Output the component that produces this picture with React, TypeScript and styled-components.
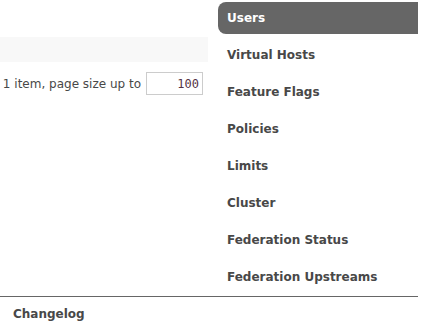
import styled, { createGlobalStyle } from "styled-components";

const GlobalStyle = createGlobalStyle`
  body {
    margin: 0;
    background: #fff;
    font-family: Verdana, "DejaVu Sans", sans-serif;
    font-size: 12px;
    color: #484848;
  }
`;

const Page = styled.div`
  width: 418px;
`;

const Main = styled.div`
  display: grid;
  grid-template-columns: 208px 200px;
  column-gap: 10px;
  padding-bottom: 3px;
`;

const Content = styled.div`
  padding-top: 37px;
`;

const Bar = styled.div`
  height: 25px;
  background: #f8f8f8;
`;

const Pager = styled.div`
  display: flex;
  align-items: center;
  justify-content: flex-end;
  gap: 5px;
  margin-top: 10px;
  padding-right: 5px;
`;

const PageSize = styled.input`
  box-sizing: border-box;
  width: 57px;
  height: 23px;
  border: 1px solid #ccc;
  padding: 0 3px;
  text-align: right;
  font-family: "DejaVu Sans Mono", monospace;
  font-size: 12px;
  color: #553344;
  outline: none;
`;

const Nav = styled.ul`
  list-style: none;
  margin: 0;
  padding: 2px 0 0;
`;

const NavItem = styled.li<{ $active?: boolean }>`
  height: 32px;
  margin-bottom: 5px;
  padding-left: 9px;
  display: flex;
  align-items: center;
  font-weight: bold;
  border-radius: 8px 0 0 8px;
  background: ${(p) => (p.$active ? "#666" : "transparent")};
  color: ${(p) => (p.$active ? "#fff" : "#484848")};

  &:last-child {
    margin-bottom: 0;
  }
`;

const Footer = styled.div`
  border-top: 1px solid #666;
  padding: 10px 0 0 13px;
  font-weight: bold;
  height: 22px;
`;

const items = [
  "Users",
  "Virtual Hosts",
  "Feature Flags",
  "Policies",
  "Limits",
  "Cluster",
  "Federation Status",
  "Federation Upstreams",
];

export default function App() {
  return (
    <Page>
      <GlobalStyle />
      <Main>
        <Content>
          <Bar />
          <Pager>
            <span>1 item, page size up to</span>
            <PageSize defaultValue="100" />
          </Pager>
        </Content>
        <Nav>
          {items.map((name, i) => (
            <NavItem key={name} $active={i === 0}>
              {name}
            </NavItem>
          ))}
        </Nav>
      </Main>
      <Footer>Changelog</Footer>
    </Page>
  );
}
